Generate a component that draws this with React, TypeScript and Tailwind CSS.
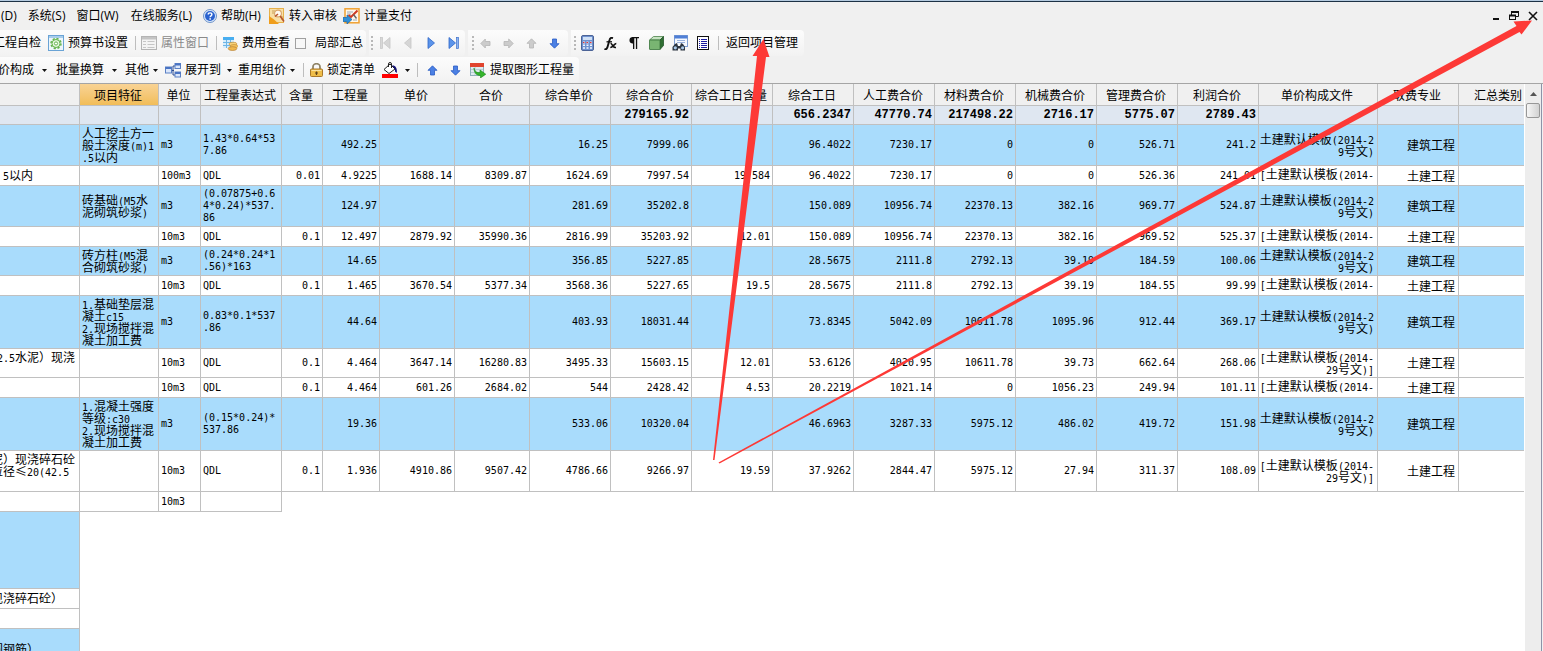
import React from "react";

const uiFont = "font-['Open_Sans','Noto_Sans_CJK_SC',sans-serif]";
const cjkFont = "font-['Noto_Sans_CJK_SC',sans-serif]";

/* ---------- icons ---------- */

const HelpIcon = () => (
  <svg width="14" height="14" viewBox="0 0 14 14">
    <circle cx="7" cy="7" r="6.5" fill="#d9e8fb" stroke="#6f93c8" />
    <circle cx="7" cy="7" r="5" fill="#2a62cf" />
    <path d="M5.2 5.6c0-2.3 3.7-2.3 3.7 0 0 1.3-1.8 1.3-1.8 2.7" fill="none" stroke="#fff" strokeWidth="1.4" />
    <rect x="6.4" y="9.2" width="1.5" height="1.5" fill="#fff" />
  </svg>
);

const ReviewIcon = () => (
  <svg width="16" height="16" viewBox="0 0 16 16">
    <rect x="0.5" y="0.5" width="14" height="14" fill="#f8dfa6" stroke="#e6b04a" />
    <path d="M0 16V8l5 3.500 5 4.500z" fill="#ef9d1b" />
    <path d="M3 3h4M3 5h3M11 9h3M12 11h2" stroke="#c9a05a" />
    <circle cx="9" cy="5.5" r="3.4" fill="#fffaf0" stroke="#d9a56a" strokeWidth="1.1" />
    <path d="M6 8.500l3-2.500M11.2 8l3.800 5.500" stroke="#b8542d" strokeWidth="1.600" />
  </svg>
);

const PayIcon = () => (
  <svg width="17" height="16" viewBox="0 0 17 16">
    <rect x="2" y="0.8" width="14" height="14" fill="#fff8ea" stroke="#f0a030" strokeWidth="1.500" />
    <path d="M4 4h6M4 6h4M10 12h4" stroke="#9aa8b8" />
    <path d="M14.500 2.500L8 9l-2.500-2" fill="none" stroke="#cf3a22" strokeWidth="2" />
    <path d="M10.500 6.500l3 4" stroke="#666" strokeWidth="1.4" />
    <path d="M0 9.500h4V7l5 4.500-5 4.500v-2.500H0z" fill="#2f8fd6" stroke="#1766a6" strokeWidth="0.7" />
  </svg>
);

const GearIcon = () => (
  <svg width="16" height="16" viewBox="0 0 16 16">
    <rect x="0.5" y="0.5" width="15" height="15" fill="#edf6fb" stroke="#6aa3d5" />
    <rect x="1" y="1" width="14" height="2" fill="#a9cdec" />
    <circle cx="8" cy="8.500" r="5" fill="#e9f8e2" stroke="#63b24d" strokeWidth="1.500" strokeDasharray="2.200 1.700" />
    <circle cx="8" cy="8.500" r="4" fill="none" stroke="#63b24d" />
    <circle cx="8" cy="8.500" r="1.600" fill="#fff" stroke="#63b24d" />
  </svg>
);

const PropertyIcon = () => (
  <svg width="16" height="14" viewBox="0 0 16 14">
    <rect x="0.5" y="0.5" width="15" height="13" fill="#f4f4f4" stroke="#b4b4b4" />
    <rect x="1" y="1" width="14" height="2.500" fill="#c4c4c4" />
    <path d="M2 5.500h3M6.500 5.500h7M2 8.500h3M6.500 8.500h7M2 11.500h3M6.500 11.500h7" stroke="#c6c6c6" />
  </svg>
);

const CostIcon = () => (
  <svg width="15" height="15" viewBox="0 0 15 15">
    <rect x="0" y="1" width="11" height="11" fill="#d7ecfa" />
    <rect x="0" y="1" width="11" height="3" fill="#48aef0" />
    <path d="M0 6.500h11M0 9.500h11M3.500 4v8M7.500 4v8" stroke="#6db5e5" />
    <ellipse cx="10" cy="8" rx="4" ry="1.800" fill="#f7d27a" stroke="#c8923a" strokeWidth="0.7" />
    <ellipse cx="11" cy="10.300" rx="3.800" ry="1.800" fill="#f2c15b" stroke="#c8923a" strokeWidth="0.7" />
    <ellipse cx="9.500" cy="12.600" rx="4.300" ry="1.900" fill="#f0b84d" stroke="#b98030" strokeWidth="0.7" />
  </svg>
);

const NavIcon = ({ back, end, off }: { back?: boolean; end?: boolean; off?: boolean }) => (
  <svg width="12" height="14" viewBox="0 0 12 14" className={back ? "rotate-180" : ""}>
    <path
      d={end ? "M1 1.500l6.500 5.500L1 12.500z" : "M3 1.500l6.500 5.500L3 12.500z"}
      fill={off ? "#d6d6d6" : "#5b94ea"}
      stroke={off ? "#c6c6c6" : "#2f66c8"}
      strokeWidth="0.8"
    />
    {end && <rect x="8.500" y="1.500" width="2" height="11" fill={off ? "#d8d8d8" : "#8db5f2"} stroke={off ? "#c4c4c4" : "#3d70cb"} strokeWidth="0.7" />}
  </svg>
);

const MoveIcon = ({ turn, off }: { turn: string; off?: boolean }) => (
  <svg width="11" height="11" viewBox="0 0 11 11" className={turn}>
    <path
      d="M5.500 0.800L10 5.300H7.500V10H3.500V5.300H1z"
      fill={off ? "#cccccc" : "#4b80e4"}
      stroke={off ? "#b5b5b5" : "#2a5cc4"}
      strokeWidth="0.8"
    />
  </svg>
);

const CalcIcon = () => (
  <svg width="13" height="16" viewBox="0 0 13 16">
    <rect x="0.5" y="0.5" width="12" height="15" rx="1.500" fill="#6f92d0" stroke="#4c6396" />
    <rect x="2" y="2" width="9" height="3" fill="#cfe0f6" />
    <path d="M2 7.500h9" stroke="#f3dfe6" strokeWidth="2" strokeDasharray="2 1.500" />
    <path d="M2 7.500h9" stroke="#dd3b3b" strokeWidth="1.200" strokeDasharray="1.500 2" />
    <path d="M2 10.300h9M2 13h9" stroke="#f2f6ff" strokeWidth="1.600" strokeDasharray="2 1.500" />
  </svg>
);

const FxIcon = () => (
  <svg width="13" height="13" viewBox="0 0 13 13" fill="none" stroke="#111">
    <path d="M0.500 12c2 .8 2.800-.8 3.300-3L5.500 3C6 1 7 .5 9 1.200" strokeWidth="1.900" />
    <path d="M2.500 4.800h5.500" strokeWidth="1.300" />
    <path d="M6.500 6.500c2-.5 1.800 4.500 5.500 4M12.300 6.500c-2 0-3.500 4-6 4" strokeWidth="1.600" />
  </svg>
);

const PilcrowIcon = () => (
  <svg width="11" height="12" viewBox="0 0 11 12">
    <path d="M11 0H4.200a3.300 3.300 0 0 0 0 6.500H5V12h1.300V1.200h1.600V12h1.300V1.200H11z" fill="#111" />
  </svg>
);

const CubeIcon = () => (
  <svg width="15" height="14" viewBox="0 0 15 14">
    <path d="M0.500 4l4-3.500h10L11 4z" fill="#c6e3c1" stroke="#4b834b" strokeWidth="0.800" />
    <path d="M11 4l3.500-3.500v9L11 13.500z" fill="#2f6f33" stroke="#23552a" strokeWidth="0.800" />
    <rect x="0.500" y="4" width="10.500" height="9.500" rx="0.500" fill="#79b572" stroke="#39733a" strokeWidth="0.800" />
  </svg>
);

const FindIcon = () => (
  <svg width="16" height="16" viewBox="0 0 16 16">
    <rect x="2.500" y="0.500" width="13" height="11" fill="#f5f9ff" stroke="#7f9fd2" />
    <rect x="2.500" y="0.500" width="13" height="3" fill="#4f7fd6" />
    <path d="M5 5.500h8M5 7.500h8" stroke="#9ab3dd" />
    <path d="M3 9l2-1 1 3h2l1-3 2 1 2 3v3.500H8.500v-2H6v2H0.500v-3.500z" fill="#2c3540" />
    <circle cx="3.300" cy="12.800" r="1.600" fill="#a8c8e8" />
    <circle cx="10.600" cy="12.800" r="1.600" fill="#a8c8e8" />
  </svg>
);

const ListIcon = () => (
  <svg width="12" height="14" viewBox="0 0 12 14">
    <rect x="0.500" y="0.500" width="11" height="13" fill="#fff" stroke="#111" />
    <path d="M2 3.500h1M4 3.500h6M2 5.500h1M4 5.500h6M2 7.500h1M4 7.500h6M2 9.500h1M4 9.500h6M2 11.500h1M4 11.500h6" stroke="#1c1ca0" />
  </svg>
);

const TreeIcon = () => (
  <svg width="16" height="15" viewBox="0 0 16 15">
    <path d="M6 7.500h3M8 3v9M8 3h2M8 12h2" stroke="#2b4b90" fill="none" />
    <rect x="0.500" y="4" width="6" height="6" fill="#dbe7fb" stroke="#5b80c4" />
    <rect x="0.500" y="4" width="6" height="2" fill="#4a74c4" />
    <rect x="10" y="0.500" width="5.500" height="5" fill="#dbe7fb" stroke="#5b80c4" />
    <rect x="10" y="0.500" width="5.500" height="2" fill="#4a74c4" />
    <rect x="10" y="9" width="5.500" height="5" fill="#dbe7fb" stroke="#5b80c4" />
    <rect x="10" y="9" width="5.500" height="2" fill="#4a74c4" />
  </svg>
);

const LockIcon = () => (
  <svg width="13" height="14" viewBox="0 0 13 14">
    <path d="M3 7V4a3.500 3.300 0 0 1 7 0v3" fill="none" stroke="#8f8467" strokeWidth="1.800" />
    <rect x="0.500" y="6" width="12" height="7.500" rx="1" fill="#efbd49" stroke="#a9782a" />
    <path d="M1.500 7.500h10" stroke="#fbe3a0" />
    <path d="M6.500 8.500v3.500M5 10h3" stroke="#5e431a" strokeWidth="1.200" />
  </svg>
);

const PaintIcon = () => (
  <svg width="16" height="16" viewBox="0 0 16 16">
    <path d="M2 7.500L8 2l5 5-6 4.500z" fill="#fff" stroke="#222" />
    <path d="M6.500 5V2a1.500 1.500 0 0 1 3 0v4" fill="none" stroke="#222" />
    <path d="M10 3.500c3-.5 5.500 2 4.800 7.500l-1.800-1.500V7z" fill="#10107a" />
    <rect x="0" y="12" width="16" height="4" fill="#f00" />
  </svg>
);

const ExtractIcon = () => (
  <svg width="16" height="15" viewBox="0 0 16 15">
    <rect x="0.500" y="0.500" width="13" height="12" fill="#dfeaf0" stroke="#8fb0bb" />
    <rect x="0" y="0" width="14" height="4" fill="#e0442f" />
    <path d="M1 6.500h12M1 9.500h12M5 4v8" stroke="#b9ced6" />
    <path d="M4 5c1 4 3 5 6 4.500V7l5.800 4.200L10.500 15v-2.500C6.500 12.500 4 10 4 5z" fill="#35b52c" stroke="#1d8a1c" strokeWidth="0.600" />
  </svg>
);

const Caret = () => (
  <svg width="5" height="3" viewBox="0 0 5 3">
    <path d="M0 0h5L2.500 3z" fill="#111" />
  </svg>
);

/* ---------- tool bar parts ---------- */

const Strip = ({ children, className = "" }: { children: React.ReactNode; className?: string }) => (
  <div className={`flex h-[26px] items-center rounded-r-sm bg-gradient-to-b from-[#fcfcfc] to-[#f2f2f2] ${className}`}>{children}</div>
);

const Tool = ({
  icon,
  children,
  caret,
  className = "",
}: {
  icon?: React.ReactNode;
  children?: React.ReactNode;
  caret?: string;
  className?: string;
}) => (
  <button type="button" className={`flex shrink-0 items-center gap-1 whitespace-nowrap ${className}`}>
    {icon}
    {children && <span>{children}</span>}
    {caret && (
      <span className={caret}>
        <Caret />
      </span>
    )}
  </button>
);

const IconTool = ({ label, children }: { label: string; children: React.ReactNode }) => (
  <button type="button" aria-label={label} className="flex w-[23px] shrink-0 items-center justify-center">
    {children}
  </button>
);

const Sep = ({ className = "" }: { className?: string }) => <span className={`h-[14px] w-px shrink-0 bg-[#bdbdbd] ${className}`} />;

const Grip = () => (
  <span className="flex w-[2px] shrink-0 flex-col gap-[2px]">
    <i className="h-[2px] bg-[#b8b8b8]" />
    <i className="h-[2px] bg-[#b8b8b8]" />
    <i className="h-[2px] bg-[#b8b8b8]" />
    <i className="h-[2px] bg-[#b8b8b8]" />
  </span>
);

/* ---------- grid data ---------- */

const headers = [
  "", "项目特征", "单位", "工程量表达式", "含量", "工程量", "单价", "合价", "综合单价", "综合合价", "综合工日含量",
  "综合工日", "人工费合价", "材料费合价", "机械费合价", "管理费合价", "利润合价", "单价构成文件", "取费专业", "汇总类别",
];

const sums = ["", "", "", "", "", "", "", "", "", "279165.92", "", "656.2347", "47770.74", "217498.22", "2716.17", "5775.07", "2789.43", "", "", ""];

type Row = {
  h: string;
  blue?: boolean;
  name?: string;
  nameClass?: string;
  feature?: string;
  unit?: string;
  expr?: string;
  nums?: string[];
  file?: string;
  major?: string;
};

const listFile = "土建默认模板(2014-2\n9号文)";
const quotaFile = "[土建默认模板(2014-\n29号文)]";
const quotaFileShort = "[土建默认模板(2014-";

const rows: Row[] = [
  { h: "h-[41px]", blue: true, feature: "人工挖土方一\n般土深度(m)1\n.5以内", unit: "m3", expr: "1.43*0.64*53\n7.86", nums: ["", "492.25", "", "", "16.25", "7999.06", "", "96.4022", "7230.17", "0", "0", "526.71", "241.2"], file: listFile, major: "建筑工程" },
  { h: "h-[20px]", name: "5以内", nameClass: "pl-[3px] pt-[3px]", unit: "100m3", expr: "QDL", nums: ["0.01", "4.9225", "1688.14", "8309.87", "1624.69", "7997.54", "19.584", "96.4022", "7230.17", "0", "0", "526.36", "241.01"], file: quotaFileShort, major: "土建工程" },
  { h: "h-[41px]", blue: true, feature: "砖基础(M5水\n泥砌筑砂浆)", unit: "m3", expr: "(0.07875+0.6\n4*0.24)*537.\n86", nums: ["", "124.97", "", "", "281.69", "35202.8", "", "150.089", "10956.74", "22370.13", "382.16", "969.77", "524.87"], file: listFile, major: "建筑工程" },
  { h: "h-[20px]", unit: "10m3", expr: "QDL", nums: ["0.1", "12.497", "2879.92", "35990.36", "2816.99", "35203.92", "12.01", "150.089", "10956.74", "22370.13", "382.16", "969.52", "525.37"], file: quotaFileShort, major: "土建工程" },
  { h: "h-[29px]", blue: true, feature: "砖方柱(M5混\n合砌筑砂浆)", unit: "m3", expr: "(0.24*0.24*1\n.56)*163", nums: ["", "14.65", "", "", "356.85", "5227.85", "", "28.5675", "2111.8", "2792.13", "39.19", "184.59", "100.06"], file: listFile, major: "建筑工程" },
  { h: "h-[20px]", unit: "10m3", expr: "QDL", nums: ["0.1", "1.465", "3670.54", "5377.34", "3568.36", "5227.65", "19.5", "28.5675", "2111.8", "2792.13", "39.19", "184.55", "99.99"], file: quotaFileShort, major: "土建工程" },
  { h: "h-[53px]", blue: true, feature: "1.基础垫层混\n凝土c15\n2.现场搅拌混\n凝土加工费", unit: "m3", expr: "0.83*0.1*537\n.86", nums: ["", "44.64", "", "", "403.93", "18031.44", "", "73.8345", "5042.09", "10611.78", "1095.96", "912.44", "369.17"], file: listFile, major: "建筑工程" },
  { h: "h-[29px]", name: "2.5水泥）现浇", nameClass: "-ml-[3px] pt-[2px]", unit: "10m3", expr: "QDL", nums: ["0.1", "4.464", "3647.14", "16280.83", "3495.33", "15603.15", "12.01", "53.6126", "4020.95", "10611.78", "39.73", "662.64", "268.06"], file: quotaFile, major: "土建工程" },
  { h: "h-[20px]", unit: "10m3", expr: "QDL", nums: ["0.1", "4.464", "601.26", "2684.02", "544", "2428.42", "4.53", "20.2219", "1021.14", "0", "1056.23", "249.94", "101.11"], file: quotaFileShort, major: "土建工程" },
  { h: "h-[53px]", blue: true, feature: "1.混凝土强度\n等级:c30\n2.现场搅拌混\n凝土加工费", unit: "m3", expr: "(0.15*0.24)*\n537.86", nums: ["", "19.36", "", "", "533.06", "10320.04", "", "46.6963", "3287.33", "5975.12", "486.02", "419.72", "151.98"], file: listFile, major: "建筑工程" },
  { h: "h-[41px]", name: "泥）现浇碎石砼\n粒径≤20(42.5", nameClass: "-ml-[9px] pt-[2px]", unit: "10m3", expr: "QDL", nums: ["0.1", "1.936", "4910.86", "9507.42", "4786.66", "9266.97", "19.59", "37.9262", "2844.47", "5975.12", "27.94", "311.37", "108.09"], file: quotaFile, major: "土建工程" },
];

const tail: Row[] = [
  { h: "h-[77px]", blue: true },
  { h: "h-[20px]", name: "现浇碎石砼）", nameClass: "-ml-[9px] pt-[3px]" },
  { h: "h-[20px]" },
  { h: "h-[41px]", blue: true, name: "圆钢筋）", nameClass: "-ml-[9px] pt-[14px]" },
];

/* Chinese runs at 12px, ASCII runs in a monospaced face half as wide. */
const Mixed = ({ text }: { text: string }) => (
  <>
    {text.split("\n").map((line, i) => (
      <span key={i} className="block h-3 whitespace-nowrap">
        {line.split(/([\x20-\x7e]+)/).map((part, j) =>
          /^[\x20-\x7e]+$/.test(part) ? (
            <span key={j} className="font-['DejaVu_Sans_Mono',monospace] text-[10px] leading-[8px]">{part}</span>
          ) : (
            part
          ),
        )}
      </span>
    ))}
  </>
);

const line = "border-b border-r border-[#c0c0c0] p-0 overflow-hidden";
const mono = "font-['DejaVu_Sans_Mono',monospace] text-[10px]";

const NameCell = ({ row, className = "" }: { row: Row; className?: string }) => (
  <td className={`${line} align-top ${className}`}>
    {row.name && (
      <div className={row.nameClass}>
        <Mixed text={row.name} />
      </div>
    )}
  </td>
);

const Grid = () => (
  <table className={`w-full min-w-[1540px] table-fixed border-separate border-spacing-0 text-[12px] leading-[12px] text-black ${cjkFont}`}>
    <colgroup>
      <col className="w-[80px]" />
      <col className="w-[79px]" />
      <col className="w-[42px]" />
      <col className="w-[81px]" />
      <col className="w-[41px]" />
      <col className="w-[57px]" />
      <col className="w-[75px]" />
      <col className="w-[75px]" />
      {headers.slice(8, 17).map((h) => (
        <col key={h} className="w-[81px]" />
      ))}
      <col className="w-[119px]" />
      <col className="w-[81px]" />
      <col />
    </colgroup>
    <thead>
      <tr className="h-[22px]">
        {headers.map((h, i) => (
          <th
            key={i}
            className={`${line} whitespace-nowrap pr-[2px] font-normal ${i === 1 ? "bg-gradient-to-b from-[#f9d394] to-[#f1bd58]" : "bg-[#f0f0f0]"}`}
          >
            {h}
          </th>
        ))}
      </tr>
      <tr className="h-[19px]">
        {sums.map((s, i) => (
          <td key={i} className={`${line} bg-[#dfe7f1] pr-[2px] text-right font-['Liberation_Mono',monospace] font-bold`}>
            {s}
          </td>
        ))}
      </tr>
    </thead>
    <tbody>
      {rows.map((r, i) => (
        <tr key={i} className={`${r.h} ${r.blue ? "bg-[#a9dcfc]" : "bg-white"}`}>
          <NameCell row={r} />
          <td className={`${line} pl-[2px]`}>{r.feature && <Mixed text={r.feature} />}</td>
          <td className={`${line} pl-[2px] ${mono}`}>{r.unit}</td>
          <td className={`${line} whitespace-pre pl-[2px] ${mono}`}>{r.expr}</td>
          {r.nums?.map((n, j) => (
            <td key={j} className={`${line} pr-[2px] text-right ${mono}`}>{n}</td>
          ))}
          <td className={`${line} pr-[3px] text-right ${r.file === quotaFileShort ? "pb-[3px]" : ""}`}>
            {r.file && <Mixed text={r.file} />}
          </td>
          <td className={`${line} pr-[3px] text-right`}>{r.major}</td>
          <td className={line} />
        </tr>
      ))}
      <tr className="h-[20px]">
        <td className={line} />
        <td className={line} />
        <td className={`${line} pl-[2px] ${mono}`}>10m3</td>
        <td className={line} />
        <td colSpan={16} />
      </tr>
      {tail.map((r, i) => (
        <tr key={i} className={r.h}>
          <NameCell row={r} className={r.blue ? "bg-[#a9dcfc]" : "bg-white"} />
          <td colSpan={19} />
        </tr>
      ))}
    </tbody>
  </table>
);

export default function App() {
  return (
    <div className={`relative flex h-screen flex-col overflow-hidden bg-[#f0f0f0] text-[12px] leading-4 text-black ${uiFont}`}>
      <div className="h-[2px] shrink-0 border-b border-[#1d3245] bg-[#b5cbe0]" />

      <nav className="flex h-7 shrink-0 items-center whitespace-nowrap">
        <button type="button" className="ml-px">(D)</button>
        <button type="button" className="ml-[11px]">系统(S)</button>
        <button type="button" className="ml-[11px]">窗口(W)</button>
        <button type="button" className="ml-[12px]">在线服务(L)</button>
        <Tool icon={<HelpIcon />} className="ml-[11px]">帮助(H)</Tool>
        <Tool icon={<ReviewIcon />} className="ml-[8px]">转入审核</Tool>
        <Tool icon={<PayIcon />} className="ml-[6px]">计量支付</Tool>
        <div className="ml-auto flex items-center gap-[9px] pr-[5px]">
          <button type="button" aria-label="最小化">
            <svg width="7" height="10" viewBox="0 0 7 10"><rect x="0" y="7" width="6" height="2" fill="#111" /></svg>
          </button>
          <button type="button" aria-label="还原">
            <svg width="10" height="10" viewBox="0 0 10 10" fill="none" stroke="#111">
              <path d="M2.500 4V0.500h7v5H7" />
              <path d="M2 1h8M0 4.500h7" strokeWidth="2" />
              <rect x="0.500" y="4.500" width="6" height="4" />
            </svg>
          </button>
          <button type="button" aria-label="关闭">
            <svg width="10" height="10" viewBox="0 0 10 10"><path d="M1 1l8 8M9 1l-8 8" stroke="#111" strokeWidth="1.600" /></svg>
          </button>
        </div>
      </nav>

      <div className="flex h-[27px] shrink-0 gap-[3px]">
        <Strip className="pr-[3px]">
          <Tool className="-ml-[7px]">工程自检</Tool>
          <Tool icon={<GearIcon />} className="ml-[7px]">预算书设置</Tool>
          <Sep className="ml-[7px]" />
          <Tool icon={<PropertyIcon />} className="ml-[5px] text-[#8a8a8a]">属性窗口</Tool>
          <Sep className="ml-[7px]" />
          <Tool icon={<CostIcon />} className="ml-[6px]">费用查看</Tool>
          <label className="ml-[5px] flex items-center gap-[9px] whitespace-nowrap">
            <input type="checkbox" className="h-[11px] w-[11px] appearance-none border border-[#a0a0a0] bg-[#f7f7f7]" />
            局部汇总
          </label>
        </Strip>
        <Strip className="pl-[2px]">
          <Grip />
          <IconTool label="首条"><NavIcon back end off /></IconTool>
          <IconTool label="上一条"><NavIcon back off /></IconTool>
          <IconTool label="下一条"><NavIcon /></IconTool>
          <IconTool label="末条"><NavIcon end /></IconTool>
        </Strip>
        <Strip className="pl-[4px] pr-[2px]">
          <Grip />
          <IconTool label="左移"><MoveIcon turn="-rotate-90" off /></IconTool>
          <IconTool label="右移"><MoveIcon turn="rotate-90" off /></IconTool>
          <IconTool label="上移"><MoveIcon turn="rotate-0" off /></IconTool>
          <IconTool label="下移"><MoveIcon turn="rotate-180" /></IconTool>
        </Strip>
        <Strip className="pl-[3px] pr-[6px]">
          <Grip />
          <IconTool label="计算器"><CalcIcon /></IconTool>
          <IconTool label="函数"><FxIcon /></IconTool>
          <IconTool label="段落"><PilcrowIcon /></IconTool>
          <IconTool label="图元"><CubeIcon /></IconTool>
          <IconTool label="查找"><FindIcon /></IconTool>
          <IconTool label="列表"><ListIcon /></IconTool>
          <Sep className="ml-[4px]" />
          <Tool className="ml-[7px]">返回项目管理</Tool>
        </Strip>
      </div>

      <div className="flex h-[26px] shrink-0">
        <Strip className="pr-[5px]">
          <Tool caret="ml-[4px]" className="-ml-[2px]">价构成</Tool>
          <Tool caret="ml-[4px]" className="ml-[9px]">批量换算</Tool>
          <Tool caret="ml-0" className="ml-[8px]">其他</Tool>
          <Tool icon={<TreeIcon />} caret="ml-[2px]" className="ml-[7px]">展开到</Tool>
          <Tool caret="ml-0" className="ml-[6px]">重用组价</Tool>
          <Sep className="ml-[8px]" />
          <Tool icon={<LockIcon />} className="ml-[6px]">锁定清单</Tool>
          <Tool icon={<PaintIcon />} caret="ml-[3px]" className="ml-[7px]" />
          <Sep className="ml-[7px]" />
          <span className="ml-[3px] flex">
            <IconTool label="上移清单"><MoveIcon turn="rotate-0" /></IconTool>
            <IconTool label="下移清单"><MoveIcon turn="rotate-180" /></IconTool>
          </span>
          <Tool icon={<ExtractIcon />} className="ml-[3px]">提取图形工程量</Tool>
        </Strip>
      </div>

      <main className="flex min-h-0 flex-1 border-t border-[#a5a5a5]">
        <div className="min-w-0 flex-1 overflow-hidden bg-white">
          <Grid />
        </div>
        <div className="flex w-[18px] shrink-0 flex-col items-center border-l border-r border-l-white border-r-[#8d93a8] bg-[#ededed]">
          <span className="flex h-[19px] items-center">
            <svg width="7" height="4" viewBox="0 0 7 4"><path d="M0 4h7L3.500 0z" fill="#555" /></svg>
          </span>
          <span className="h-[15px] w-[14px] rounded-[2px] border border-[#979797] bg-gradient-to-r from-[#f6f6f6] to-[#d2d2d2]" />
        </div>
        <div className="w-px shrink-0 bg-[#f0f0f0]" />
      </main>

      <svg className="pointer-events-none absolute left-0 top-0" width="1543" height="651" viewBox="0 0 1543 651" fill="#fd3936">
        <path d="M713 460L757 56L752.500 56L763.500 39L769.500 57L766 57L714.500 460z" />
        <path d="M718.500 462.500L1516.500 26L1513.500 21.500L1532 20.500L1521.500 34.500L1519.500 32L719.500 463.500z" />
      </svg>
    </div>
  );
}
